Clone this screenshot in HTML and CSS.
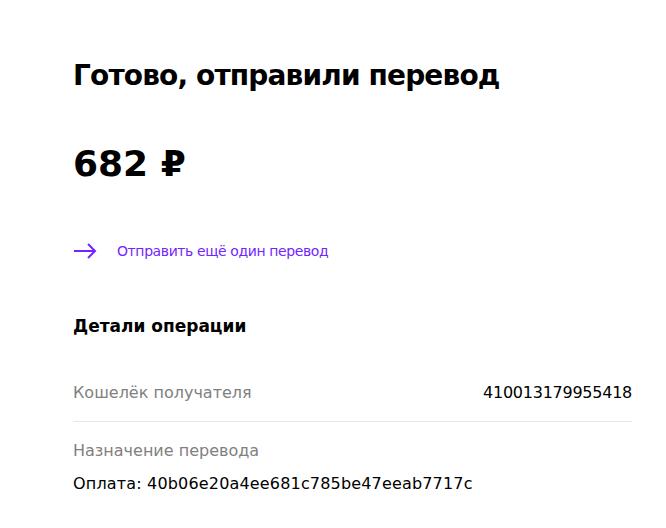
FILE: index.html
```html
<!DOCTYPE html>
<html lang="ru">
<head>
<meta charset="utf-8">
<link rel="stylesheet" href="styles.css">
</head>
<body>
<main class="page">
  <h1 class="title">Готово, отправили перевод</h1>
  <div class="amount">682 ₽</div>
  <a class="again" href="#">
    <svg class="arrow" width="24" height="16" viewBox="0 0 24 16" aria-hidden="true">
      <path d="M1 8H22M15 1L22 8L15 15" fill="none" stroke="#7424ff" stroke-width="2"/>
    </svg>
    <span>Отправить ещё один перевод</span>
  </a>
  <h2 class="subtitle">Детали операции</h2>
  <div class="row">
    <span class="label">Кошелёк получателя</span>
    <span class="value">410013179955418</span>
  </div>
  <div class="block">
    <div class="label">Назначение перевода</div>
    <div class="value">Оплата: 40b06e20a4ee681c785be47eeab7717c</div>
  </div>
</main>
</body>
</html>
```

FILE: styles.css
```css
html, body {
  margin: 0;
  padding: 0;
  background: #fff;
}
body {
  font-family: "DejaVu Sans", sans-serif;
  color: #000;
}
.page {
  width: 559px;
  padding: 58px 0 0 73px;
  display: flex;
  flex-direction: column;
}
.title {
  margin: 0;
  font-size: 28px;
  line-height: 36px;
  font-weight: 700;
  letter-spacing: -0.85px;
}
.amount {
  margin-top: 48px;
  font-size: 36px;
  line-height: 44px;
  font-weight: 700;
}
.again {
  margin-top: 55px;
  display: flex;
  align-items: center;
  gap: 20px;
  color: #7424ff;
  text-decoration: none;
  font-size: 14px;
  line-height: 20px;
  letter-spacing: -0.4px;
}
.arrow {
  display: block;
}
.subtitle {
  margin: 53px 0 0;
  font-size: 17px;
  line-height: 24px;
  font-weight: 700;
}
.row {
  margin-top: 43px;
  display: flex;
  justify-content: space-between;
  align-items: baseline;
  padding-bottom: 16px;
  border-bottom: 1px solid #e6e6e6;
  font-size: 16px;
  line-height: 24px;
}
.label {
  color: #808080;
}
.row .value {
  letter-spacing: -0.25px;
}
.block {
  padding-top: 17px;
  font-size: 16px;
  line-height: 24px;
}
.block .value {
  margin-top: 9px;
  letter-spacing: 0.17px;
}
```
